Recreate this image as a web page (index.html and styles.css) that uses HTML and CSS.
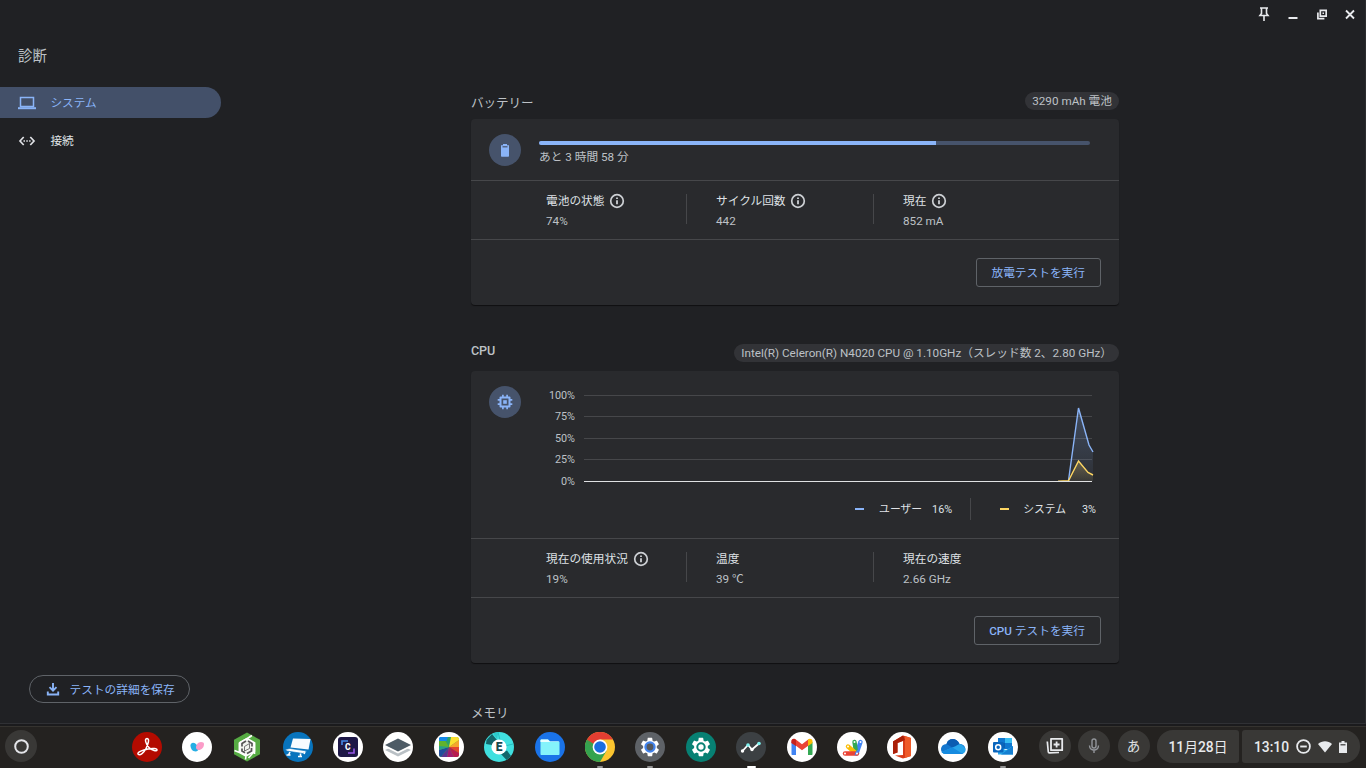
FILE: index.html
```html
<!DOCTYPE html>
<html lang="ja">
<head>
<meta charset="utf-8">
<title>診断</title>
<link rel="stylesheet" href="styles.css">
</head>
<body>
<svg class="defs" width="0" height="0">
  <symbol id="info" viewBox="0 0 16 16"><circle cx="8" cy="8" r="6.300" fill="none" stroke="currentColor" stroke-width="1.700"/><path d="M7.100 7.200h1.800v4H7.100zM7.100 4.500h1.800v1.600H7.100z" fill="currentColor"/></symbol>
  <symbol id="gear" viewBox="0 0 24 24"><path d="M19.4 13c.04-.3.07-.6.07-1s-.03-.7-.07-1l2.1-1.6c.2-.15.24-.4.12-.64l-2-3.46c-.12-.22-.37-.3-.6-.22l-2.5 1a7.300 7.300 0 0 0-1.700-.98L14.440 2.450A.49.49 0 0 0 13.950 2h-4c-.25 0-.46.18-.49.42L9.080 5.070c-.6.25-1.170.6-1.690.98l-2.490-1a.5.5 0 0 0-.61.220l-2 3.460c-.13.22-.07.49.12.64L4.530 11a7.900 7.900 0 0 0 0 2l-2.110 1.650a.5.5 0 0 0-.12.640l2 3.460c.12.220.39.3.61.220l2.490-1c.52.4 1.080.73 1.690.98l.38 2.650c.03.240.24.420.49.420h4c.25 0 .46-.18.49-.42l.38-2.650c.61-.25 1.170-.59 1.690-.98l2.490 1c.23.090.49 0 .61-.220l2-3.460a.5.5 0 0 0-.12-.64z" fill="currentColor"/></symbol>
</svg>

<div class="window">
  <header class="titlebar">
    <svg width="12" height="16" viewBox="0 0 12 16"><path d="M2 2h8M3.500 2v5.500L2 9.500h8L8.500 7.500V2M6 9.500V15" fill="none" stroke="#e8eaed" stroke-width="1.600"/></svg>
    <svg width="10" height="16" viewBox="0 0 10 16"><path d="M.5 12h9" stroke="#e8eaed" stroke-width="2"/></svg>
    <svg width="10" height="16" viewBox="0 0 10 16"><path d="M3.300 4.300h5.900v5.900H3.300zM.9 6.500v6.200h6.500" fill="none" stroke="#e8eaed" stroke-width="1.700"/><path d="M5.500 6.500h1.500V8H5.500z" fill="#e8eaed"/></svg>
    <svg width="10" height="16" viewBox="0 0 10 16"><path d="M1 4.500l8 8M9 4.500l-8 8" stroke="#e8eaed" stroke-width="1.800"/></svg>
  </header>

  <div class="body">
    <aside class="sidebar">
      <h1 class="app-title">診断</h1>
      <nav class="nav">
        <a class="nav-item active">
          <svg width="18" height="14" viewBox="0 0 18 14"><path d="M2.500 1.500h13v9h-13z" fill="none" stroke="currentColor" stroke-width="1.500"/><path d="M0 11.200h18V13.200H0z" fill="currentColor"/></svg>
          <span>システム</span>
        </a>
        <a class="nav-item">
          <svg width="18" height="14" viewBox="0 0 18 14"><path d="M5.700 3L2 7l3.700 4M12.300 3L16 7l-3.700 4" fill="none" stroke="currentColor" stroke-width="1.700"/><path d="M5.500 6.300h1.500v1.500H5.500zM8.300 6.300h1.500v1.500H8.300zM11.100 6.300h1.500v1.500h-1.500z" fill="currentColor"/></svg>
          <span>接続</span>
        </a>
      </nav>
      <button class="save">
        <svg width="14" height="14" viewBox="0 0 14 14"><path d="M7 1v7M3.500 5.200L7 8.700l3.500-3.500M1.800 9.500v3h10.400v-3" fill="none" stroke="currentColor" stroke-width="1.900"/></svg>
        <span>テストの詳細を保存</span>
      </button>
    </aside>

    <main class="content">
      <section class="section">
        <div class="section-head"><h2>バッテリー</h2><span class="chip">3290 mAh 電池</span></div>
        <div class="card">
          <div class="battery-top">
            <span class="badge"><svg width="16" height="16" viewBox="0 0 16 16"><path d="M6 2h4v1.200h2V14a.8.800 0 0 1-.8.800H4.800A.8.800 0 0 1 4 14V3.200h2z" fill="#8ab4f8"/><path d="M5.500 4.800h5" stroke="#46536b" stroke-width="1.200"/></svg></span>
            <div class="battery-info"><div class="bar"><div class="fill" style="width:72%"></div></div><p>あと 3 時間 58 分</p></div>
          </div>
          <div class="stats">
            <div class="stat"><b>電池の状態<svg class="info"><use href="#info"/></svg></b><span>74%</span></div>
            <div class="stat second"><b>サイクル回数<svg class="info near"><use href="#info"/></svg></b><span>442</span></div>
            <div class="stat third"><b>現在<svg class="info"><use href="#info"/></svg></b><span>852 mA</span></div>
          </div>
          <div class="actions"><button class="run">放電テストを実行</button></div>
        </div>
      </section>

      <section class="section">
        <div class="section-head latin"><h2>CPU</h2><span class="chip">Intel(R) Celeron(R) N4020 CPU @ 1.10GHz（スレッド数 2、2.80 GHz）</span></div>
        <div class="card">
          <div class="cpu-top">
            <span class="badge"><svg width="16" height="16" viewBox="0 0 16 16"><path d="M3.500 3.500h9v9h-9z" fill="none" stroke="#8ab4f8" stroke-width="2" stroke-linejoin="round"/><path d="M6.200 6.200h3.600v3.600H6.200z" fill="#8ab4f8"/><path d="M5.900.7v2.300M10.100.7v2.300M5.900 13v2.300M10.100 13v2.300M.7 5.900H3M.7 10.100H3M13 5.900h2.300M13 10.100h2.300" stroke="#8ab4f8" stroke-width="1.700"/></svg></span>
            <div class="chart-area">
              <div class="chart">
                <div class="ticks"><span>100%</span><span>75%</span><span>50%</span><span>25%</span><span>0%</span></div>
                <svg width="510" height="92" viewBox="0 0 510 92">
                  <defs>
                    <linearGradient id="blue" x1="0" y1="0" x2="0" y2="1"><stop offset="0" stop-color="#8ab4f8" stop-opacity=".25"/><stop offset="1" stop-color="#8ab4f8" stop-opacity=".04"/></linearGradient>
                    <linearGradient id="yellow" x1="0" y1="0" x2="0" y2="1"><stop offset="0" stop-color="#fdd663" stop-opacity=".26"/><stop offset="1" stop-color="#fdd663" stop-opacity=".06"/></linearGradient>
                  </defs>
                  <path d="M0 4.500h508M0 25.500h508M0 47.500h508M0 68.500h508" stroke="#46474a"/>
                  <path d="M484.500 90L494.500 17 505 54l4 7v29z" fill="url(#blue)"/>
                  <path d="M484.500 90L494.500 70 504 81.500l5 2.500v6z" fill="url(#yellow)"/>
                  <path d="M484.500 89.500L494.500 17 505 54l4 7" fill="none" stroke="#8ab4f8" stroke-width="1.400"/>
                  <path d="M474 90.300l10.500-.6L494.500 70 504 81.500l5 2.500" fill="none" stroke="#fdd663" stroke-width="1.400"/>
                  <path d="M0 90.500h508" stroke="#e0e1e3"/>
                </svg>
              </div>
              <div class="legend">
                <i class="key user"></i><span class="name">ユーザー</span><span class="pct">16%</span>
                <span class="sep"></span>
                <i class="key system"></i><span class="name">システム</span><span class="pct last">3%</span>
              </div>
            </div>
          </div>
          <div class="stats">
            <div class="stat"><b>現在の使用状況<svg class="info"><use href="#info"/></svg></b><span>19%</span></div>
            <div class="stat second"><b>温度</b><span>39 ℃</span></div>
            <div class="stat third"><b>現在の速度</b><span>2.66 GHz</span></div>
          </div>
          <div class="actions"><button class="run"><em>CPU</em> テストを実行</button></div>
        </div>
      </section>

      <section class="section"><div class="section-head"><h2>メモリ</h2></div></section>
    </main>
  </div>
</div>

<footer class="shelf">
  <div class="round launcher"><svg width="32" height="32" viewBox="0 0 32 32"><circle cx="16.500" cy="16.500" r="6.300" fill="none" stroke="#e4e5e9" stroke-width="2"/></svg></div>
  <div class="apps">
    <div class="app"><svg viewBox="0 0 30 30"><circle cx="15" cy="15" r="15" fill="#b30b00"/><path d="M6 22c-1-2 5-4 10-5s9-.5 9 1-5 .5-8-2.500-5-9-2-9 1 6-1 10-6 8-8 5.500z" fill="none" stroke="#fff" stroke-width="1.500"/></svg></div>
    <div class="app"><svg viewBox="0 0 30 30"><circle cx="15" cy="15" r="15" fill="#fff"/><path d="M8.500 13.500c0-3 3-3.500 4.500-2.200l4.500 4.200c-.5 2.500-2.500 4-4 4-3 0-5-3-5-6z" fill="#27aee4"/><path d="M22 12c0 3.500-2.500 6-5.500 6-1.500 0-2.500-1-2.500-2.500 0-2.500 2-5.500 5-5.500 2 0 3 .7 3 2z" fill="#fb9cc8"/></svg></div>
    <div class="app"><svg viewBox="0 0 30 30"><path d="M15 .5l13 7.300v14.400l-13 7.300-13-7.300V7.800z" fill="#56ab43"/><path d="M15 6.500l7.500 4.250v8.500L15 23.500l-7.500-4.250v-8.500z" fill="#f1f4ee" stroke="#fff" stroke-width="1.500"/><path d="M7.500 11l12-7M22.500 10.500V22M7.500 11v9.500L14 24l-.5 3.500M2.500 18.500l5 2M17 5l3-1.500M22.500 19l-6 7" stroke="#fff" stroke-width="1.600" fill="none"/><path d="M14 9l-4 2.500v3M10 16.500V19l3 1.700M15 21.500l4.500-2.500v-3M20 14.500v-3L16 9" stroke="#555" stroke-width="1.700" fill="none"/><path d="M17.500 11.500v5L12.500 19v-4.500z" fill="none" stroke="#666" stroke-width=".9"/></svg></div>
    <div class="app"><svg viewBox="0 0 30 30"><circle cx="15" cy="15" r="15" fill="#0874bd"/><path d="M10 6.500l17.500.5-2 10.500L7.500 15.500z" fill="#f7fbff"/><path d="M2 17.500l5-1 17 2.500-4 2.500L4 19z" fill="#fff" stroke="#0874bd" stroke-width=".6"/><path d="M3.500 23h4M7 20l-1.500 3M15 24.500h4M17.500 21.500v3M22 20l-1 2" stroke="#fff" stroke-width="1.600"/></svg></div>
    <div class="app"><svg viewBox="0 0 30 30"><circle cx="15" cy="15" r="15" fill="#fff"/><rect x="5" y="5" width="20" height="20" rx="3" fill="#1e1847"/><path d="M9 13V9h6" stroke="#4387e7" stroke-width="1.600" fill="none"/><path d="M21 16.500V21h-6" stroke="#9758e8" stroke-width="1.600" fill="none"/><text x="14.700" y="18" text-anchor="middle" class="glyph" font-size="8.500" fill="#fff">C</text></svg></div>
    <div class="app"><svg viewBox="0 0 30 30"><circle cx="15" cy="15" r="15" fill="#fff"/><path d="M2 18l13-6 13 6-13 6.500z" fill="#b9c0c5"/><path d="M2 15l13-6 13 6-13 6.500z" fill="#fff"/><path d="M2 13l13-6.500L28 13l-13 6.500z" fill="#4d5b66"/></svg></div>
    <div class="app"><svg viewBox="0 0 30 30"><circle cx="15" cy="15" r="15" fill="#fff"/><clipPath id="wheel"><rect x="5" y="5" width="20" height="20" rx="2.500"/></clipPath><g clip-path="url(#wheel)"><path d="M5 5h20v20H5z" fill="#61b32e"/><path d="M15 15L9 5h9z" fill="#2aa36a"/><path d="M15 15l2-10h8v3z" fill="#fbe031"/><path d="M15 15l10-7v7z" fill="#f5a52d"/><path d="M15 15h10v6z" fill="#e4442f"/><path d="M15 15l10 6v4h-5z" fill="#b81a50"/><path d="M15 15l5 10h-7z" fill="#a31b72"/><path d="M15 15l-2 10H7z" fill="#5b3490"/><path d="M15 15L7 25H5v-7z" fill="#214d9d"/><path d="M15 15L5 18v-4z" fill="#27a08b"/></g><path d="M6 5h8l-1.500 4H5V6z" fill="#1689e9"/></svg></div>
    <div class="app"><svg viewBox="0 0 30 30"><circle cx="15" cy="15" r="15" fill="#40e0df"/><path d="M2.500 8L8 2l5 6-5 5-6-1zM17 22l6-3.500 4 5.500-4.500 4z" fill="#12666b"/><path d="M14 0l2 8M29 12l-8 2" stroke="#24bfc0"/><path d="M9 1.500l4 5.500 1.500-7z" fill="#2cc9ca"/><circle cx="15" cy="15" r="7.600" fill="#fff"/><text x="15" y="19.200" text-anchor="middle" class="glyph" font-size="12" fill="#17494c">E</text></svg></div>
    <div class="app"><svg viewBox="0 0 30 30"><circle cx="15" cy="15" r="15" fill="#1a73e8"/><path d="M5.500 8.500c0-.6.400-1 1-1H13l2 2h8.500c.6 0 1 .4 1 1V22c0 .6-.4 1-1 1h-17c-.6 0-1-.4-1-1z" fill="#85f3fb"/><path d="M5.500 10V8.500c0-.6.400-1 1-1H13l2 2h8.500l.5.500z" fill="#e8ffff"/></svg></div>
    <div class="app running"><svg viewBox="0 0 30 30"><circle cx="15" cy="15" r="15" fill="#fbc52f"/><path d="M2 7.500A15 15 0 0 0 15 30l6.500-11.200L15 15z" fill="#34a34f"/><path d="M2 7.500A15 15 0 0 1 28 7.500H15L8.500 11.200 7 16z" fill="#e43e32"/><path d="M2 7.500l6.500 11.300L13 15z" fill="#34a34f"/><circle cx="15" cy="15" r="7.400" fill="#fff"/><circle cx="15" cy="15" r="5.800" fill="#1a6ee0"/></svg></div>
    <div class="app running"><svg viewBox="0 0 30 30"><circle cx="15" cy="15" r="15" fill="#5e6267"/><use href="#gear" x="4" y="4" width="22" height="22" color="#fff"/><circle cx="15" cy="15" r="5.700" fill="#4284ed"/><circle cx="15" cy="15" r="3.400" fill="#55585d"/></svg></div>
    <div class="app"><svg viewBox="0 0 30 30"><circle cx="15" cy="15" r="15" fill="#078073"/><use href="#gear" x="4" y="4" width="22" height="22" color="#fff"/><circle cx="15" cy="15" r="3.700" fill="none" stroke="#078073" stroke-width="2"/></svg></div>
    <div class="app focused"><svg viewBox="0 0 30 30"><circle cx="15" cy="15" r="15" fill="#3c4043"/><path d="M6.500 19l5.500-6 4 4.500 7-6" fill="none" stroke="#fff" stroke-width="1.800"/><circle cx="6.500" cy="19" r="1.700" fill="#fff"/><circle cx="12" cy="13" r="1.800" fill="#7ef2ef"/><circle cx="16" cy="17.500" r="1.700" fill="#fff"/><circle cx="23" cy="11.500" r="1.800" fill="#7ef2ef"/></svg></div>
    <div class="app"><svg viewBox="0 0 30 30"><circle cx="15" cy="15" r="15" fill="#fff"/><path d="M4.500 10v12c0 .6.400 1 1 1H9V12z" fill="#4285f4"/><path d="M21 12v11h3.500c.6 0 1-.4 1-1V10z" fill="#34a853"/><path d="M4.500 11V9c0-2 2.500-3 4-1.800l6.500 5 6.500-5v6.300L15 18.300l-6-4.500z" fill="#ea4335"/><path d="M21 7.500c1.500-1.500 4.500-.5 4.500 1.500v2L21 14z" fill="#fbbc04"/><path d="M4.500 11V9c0-1.500 1.500-2.300 2.800-2.200L9 8v6z" fill="#c5221f"/></svg></div>
    <div class="app"><svg viewBox="0 0 30 30"><circle cx="15" cy="15" r="15" fill="#fff"/><g stroke-linecap="round" stroke-width="4.400"><path d="M19.500 21.500l4-11.500" stroke="#4285f4"/><path d="M19 20l-1.500-10" stroke="#34a853"/><path d="M18 20.500L11 14.500" stroke="#fbbc04"/><path d="M20 21.500H8" stroke="#ea4335"/></g><path d="M17.500 23.700l4-2.700 1-5-4 4z" fill="#4285f4"/><g fill="#fff"><circle cx="23.500" cy="10" r="1"/><circle cx="17.500" cy="10" r="1"/><circle cx="11" cy="14.500" r="1"/><circle cx="8" cy="21.500" r="1"/><circle cx="20" cy="21.500" r="1"/></g></svg></div>
    <div class="app"><svg viewBox="0 0 30 30"><circle cx="15" cy="15" r="15" fill="#fff"/><path d="M6 9.500L16 3.500l8 2.500v18l-8 2.500L8 23.500l8-.5V9l-5.500 2v9.500L6 22z" fill="#d83b18"/><path d="M18 4l6 2v18l-6 2z" fill="#ef5a28"/><path d="M6 9.500L16 3.500 18 8l-7.500 3v9.500L6 22z" fill="#aa1f08"/></svg></div>
    <div class="app"><svg viewBox="0 0 30 30"><circle cx="15" cy="15" r="15" fill="#fff"/><path d="M8.500 12C10 6 18.500 5 21.500 12c8 0 7 10 1.500 10H8C1 22 1.500 12 8.500 12z" fill="#1477cf"/><path d="M8.500 12c1.500-6 10-7 13 0L15 16z" fill="#0b5cb2"/><path d="M3.500 20L18 14c3-2.500 6-2 7 0 5 3 2 8-2 8H8c-2 0-3.500-1-4.500-2z" fill="#28a4ea"/><path d="M3.500 20l11-4.500L25 22H8c-2 0-3.500-1-4.500-2z" fill="#168be0"/></svg></div>
    <div class="app running"><svg viewBox="0 0 30 30"><circle cx="15" cy="15" r="15" fill="#fff"/><path d="M10 6h14v11H10z" fill="#0f78d0"/><path d="M17 6h7v5h-7z" fill="#38bdf2"/><path d="M10 11h7v5h-7z" fill="#0b60b1"/><path d="M10 15l8 3 7-4v8.500H10z" fill="#28a8ea"/><path d="M25 14v8.500H13z" fill="#157fd1"/><rect x="5" y="10" width="10.500" height="10.500" rx="1" fill="#0a66bd"/><circle cx="10.200" cy="15.200" r="2.500" fill="none" stroke="#fff" stroke-width="1.500"/></svg></div>
  </div>
  <div class="status">
    <div class="round"><svg width="32" height="32" viewBox="0 0 32 32"><path d="M12 8.800h11.200v11.400H12z" fill="none" stroke="#e8eaed" stroke-width="1.800" stroke-linejoin="round"/><path d="M17.600 11.500v6M14.600 14.500h6" stroke="#e8eaed" stroke-width="1.800"/><path d="M8.300 11.500l1 10.500c.1.700.5 1 1.200.9L20 22.500" fill="none" stroke="#e8eaed" stroke-width="1.700"/></svg></div>
    <div class="round"><svg width="32" height="32" viewBox="0 0 32 32"><rect x="14" y="9" width="4" height="9" rx="2" fill="none" stroke="#92959a" stroke-width="1.400"/><path d="M11.500 15.500c0 6 9 6 9 0M16 20v3" fill="none" stroke="#92959a" stroke-width="1.400"/></svg></div>
    <div class="round ime">あ</div>
    <div class="pill date">11<span>月</span>28<span>日</span></div>
    <div class="pill time"><span>13:10</span>
      <svg class="dnd" width="15" height="15" viewBox="0 0 15 15"><circle cx="7.500" cy="7.500" r="6.400" fill="none" stroke="#e8eaed" stroke-width="1.800"/><path d="M4.200 7.500h6.600" stroke="#e8eaed" stroke-width="1.900"/></svg>
      <svg class="wifi" width="14" height="12" viewBox="0 0 14 12"><path d="M0 3c4-3.600 10-3.600 14 0L7 11.500z" fill="#e8eaed"/></svg>
      <svg class="batt" width="8" height="14" viewBox="0 0 8 14"><path d="M2.500 1h3v1.500H8V13H0V2.500h2.500z" fill="#e8eaed"/><path d="M1.500 4h5v1.500h-5z" fill="#5a5a5a"/></svg>
    </div>
  </div>
</footer>
</body>
</html>
```
FILE: styles.css
```css
* { box-sizing: border-box; }
html, body { margin: 0; height: 100%; }
body {
  width: 1366px; height: 768px; overflow: hidden;
  display: flex; flex-direction: column;
  background: #202124; color: #dfe1e5;
  font: 400 11.7px/18px Roboto, "Noto Sans CJK JP", sans-serif;
}
svg { display: block; flex: none; }
h1, h2, p { margin: 0; font-weight: 400; }
button { font: inherit; background: none; padding: 0; color: #8ab4f8; border: 1px solid #5f6368; }
.defs { position: absolute; }

.window { height: 724px; flex: none; display: flex; flex-direction: column; border-right: 1px solid #2b2c2f; border-bottom: 1px solid #303135; overflow: hidden; }
.titlebar { height: 30px; flex: none; display: flex; justify-content: flex-end; align-items: center; gap: 18.5px; padding: 0 10px 2px 0; }
.body { display: flex; flex: 1; min-height: 0; }
.sidebar { width: 221px; display: flex; flex-direction: column; padding-bottom: 20px; }
.app-title { font-size: 14.4px; line-height: 24px; padding: 15px 0 0 18px; color: #bdc1c6; height: 57px; }
.nav { display: flex; flex-direction: column; gap: 7px; }
.nav-item { height: 31px; display: flex; align-items: center; gap: 14.4px; padding-left: 18px; }
.nav-item.active { background: #435069; color: #8ab4f8; border-radius: 0 16px 16px 0; }
.save { margin: auto 0 0 29px; width: 161px; height: 28px; border-radius: 14px; display: flex; align-items: center; gap: 9.5px; padding-left: 16px; }
.save span { padding-top: 2px; }

.content { width: 648px; margin-left: 250px; padding-top: 55px; display: flex; flex-direction: column; gap: 32px; }
.section-head { height: 34px; display: flex; justify-content: space-between; align-items: flex-start; padding-top: 7px; }
.section-head h2 { font-size: 12.6px; line-height: 22px; letter-spacing: -.1px; color: #bdc1c6; }
.section-head.latin h2 { font-weight: 500; line-height: 14px; }
.chip { height: 18px; border-radius: 9px; background: #323337; color: #bdc1c6; padding: 0 7px; white-space: nowrap; }
.card { background: #292a2d; border-radius: 4px; box-shadow: 0 1px 1px rgba(0,0,0,.55); }
.badge { width: 32px; height: 32px; flex: none; border-radius: 50%; background: #46536b; display: flex; align-items: center; justify-content: center; }
.battery-top { height: 61px; display: flex; padding: 15px 29px 0 18px; gap: 18px; }
.battery-info { flex: 1; padding-top: 7px; color: #bdc1c6; }
.bar { height: 4px; border-radius: 2px; background: #46536b; overflow: hidden; }
.fill { height: 4px; background: #8ab4f8; }
.battery-info p { margin-top: 3px; }
.stats { height: 60px; border: solid #46474a; border-width: 1px 0; display: flex; padding: 13px 0 0 75px; }
.stat { width: 140px; height: 30px; display: flex; flex-direction: column; }
.stat b { font-weight: 400; height: 14px; line-height: 14px; display: flex; align-items: center; white-space: nowrap; }
.stat span { margin-top: 4px; color: #bdc1c6; line-height: 18px; }
.stat.second, .stat.third { border-left: 1px solid #46474a; width: 187px; padding-left: 29px; }
.info { width: 16px; height: 16px; margin-left: 5px; color: #cdd0d4; }
.info.near { margin-left: 4px; }
.actions { height: 65px; display: flex; justify-content: flex-end; padding: 18px 18px 0 0; }
.run { height: 29px; padding: 0 15px 0 14.4px; border-radius: 3px; }
.run em { font-style: normal; font-weight: 500; }

.cpu-top { height: 167px; display: flex; padding: 15px 0 0 18px; gap: 18px; }
.chart-area { flex: 1; padding-top: 5px; }
.chart { display: flex; gap: 9px; }
.ticks { width: 36px; height: 92px; display: flex; flex-direction: column; text-align: right; font-size: 10.8px; color: #bdc1c6; }
.ticks span { height: 21.4px; line-height: 9px; flex: none; }
.legend { height: 22px; margin-top: 15px; display: flex; align-items: center; justify-content: flex-end; font-size: 10.8px; padding-right: 23px; }
.legend .name, .legend .pct { padding-top: 2px; }
.key { width: 9px; height: 2px; margin-right: 15px; }
.key.user { background: #8ab4f8; }
.key.system { background: #fdd663; }
.pct { margin-left: 10px; }
.pct.last { margin-left: 16px; }
.sep { width: 1px; height: 22px; background: #46474a; margin: 0 29px 0 17.5px; }
.key.system { margin-right: 14.5px; }

.shelf { height: 44px; flex: none; display: flex; align-items: flex-start; background: #242220; border-top: 2px solid #1b1b1d; box-shadow: inset 0 1px #35332f; padding: 4px 6px 0 5px; }
.round { width: 32px; height: 32px; border-radius: 50%; background: #393836; flex: none; }
.apps { display: flex; gap: 20.4px; padding: 2px 0 0 94.5px; }
.app { width: 30px; height: 36px; flex: none; display: flex; flex-direction: column; align-items: center; justify-content: space-between; }
.app svg { width: 30px; height: 30px; }
.app.running::after, .app.focused::after { content: ""; width: 6px; height: 2px; background: #929292; border-radius: 1px; }
.app.focused::after { width: 9px; background: #fff; }
.glyph { font-family: Roboto, sans-serif; font-weight: 900; }
.status { display: flex; margin-left: auto; }
.status .round { margin-right: 7.5px; }
.ime { font-size: 13.5px; line-height: 33px; text-align: center; }
.pill { height: 33px; background: #393836; color: #e8eaed; font-size: 13.8px; font-weight: 500; line-height: 34px; white-space: nowrap; }
.date { width: 82px; border-radius: 16px 3px 3px 16px; margin-right: 3px; text-align: center; }
.date span { font-weight: 400; }
.time { width: 118px; border-radius: 3px 16px 16px 3px; display: flex; align-items: center; padding-left: 12px; }
.time span { width: 41.5px; }
.wifi { margin-left: 7.5px; }
.batt { margin-left: 7px; }
```
